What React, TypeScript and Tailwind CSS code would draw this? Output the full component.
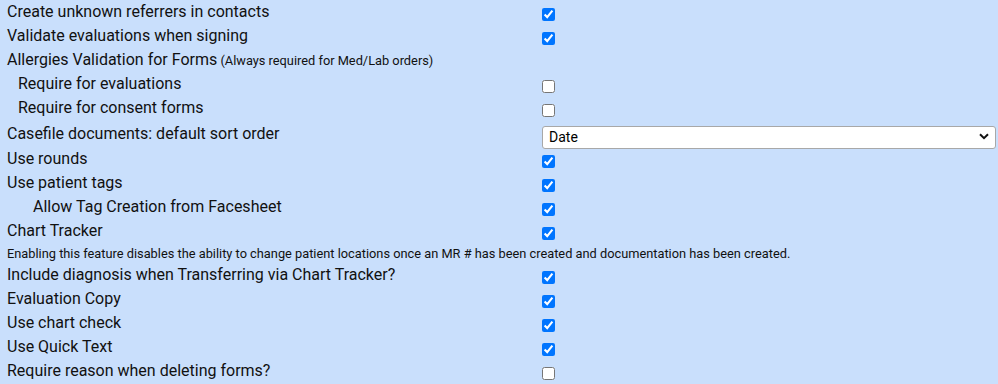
import React from "react";

type Row =
  | { kind: "check"; label: string; indent?: number; checked: boolean; small?: string }
  | { kind: "label"; label: string; small?: string }
  | { kind: "select"; label: string; value: string }
  | { kind: "note"; text: string };

const rows: Row[] = [
  { kind: "check", label: "Create unknown referrers in contacts", checked: true },
  { kind: "check", label: "Validate evaluations when signing", checked: true },
  { kind: "label", label: "Allergies Validation for Forms", small: "(Always required for Med/Lab orders)" },
  { kind: "check", label: "Require for evaluations", indent: 1, checked: false },
  { kind: "check", label: "Require for consent forms", indent: 1, checked: false },
  { kind: "select", label: "Casefile documents: default sort order", value: "Date" },
  { kind: "check", label: "Use rounds", checked: true },
  { kind: "check", label: "Use patient tags", checked: true },
  { kind: "check", label: "Allow Tag Creation from Facesheet", indent: 2, checked: true },
  { kind: "check", label: "Chart Tracker", checked: true },
  {
    kind: "note",
    text: "Enabling this feature disables the ability to change patient locations once an MR # has been created and documentation has been created.",
  },
  { kind: "check", label: "Include diagnosis when Transferring via Chart Tracker?", checked: true },
  { kind: "check", label: "Evaluation Copy", checked: true },
  { kind: "check", label: "Use chart check", checked: true },
  { kind: "check", label: "Use Quick Text", checked: true },
  { kind: "check", label: "Require reason when deleting forms?", checked: false },
];

function Label({ text, indent = 0, small }: { text: string; indent?: number; small?: string }) {
  const pad = indent === 2 ? "pl-[33px]" : indent === 1 ? "pl-[18px]" : "pl-[7px]";
  return (
    <div className={`w-[542px] shrink-0 whitespace-nowrap ${pad}`}>
      {text}
      {small && <span className="text-[12.8px]"> {small}</span>}
    </div>
  );
}

export default function App() {
  return (
    <div
      className="w-[998px] h-[384px] overflow-hidden bg-[#c9dffc] text-[16px] text-[#111]"
      style={{ fontFamily: "Roboto, 'Liberation Sans', sans-serif" }}
    >
      {rows.map((row, i) => {
        if (row.kind === "note") {
          return (
            <div key={i} className="h-[20px] flex items-center pt-[1px] pl-[7px] text-[12.8px] whitespace-nowrap">
              {row.text}
            </div>
          );
        }
        if (row.kind === "select") {
          return (
            <div key={i} className="h-[27px] flex items-center">
              <Label text={row.label} />
              <div className="relative self-start mt-[5px]">
                <select
                  defaultValue={row.value}
                  className="appearance-none w-[454px] h-[23px] bg-white border border-[#a8a8a8] rounded-[3px] pl-[6px] text-[14px] text-black outline-none"
                >
                  <option>Date</option>
                  <option>Name</option>
                </select>
                <svg
                  className="absolute right-[7px] top-[8px] pointer-events-none"
                  width="10"
                  height="7"
                  viewBox="0 0 10 7"
                >
                  <path d="M1 1.2 L5 5.2 L9 1.2" fill="none" stroke="#111" strokeWidth="2" />
                </svg>
              </div>
            </div>
          );
        }
        return (
          <div key={i} className="h-6 flex items-center">
            <Label text={row.label} indent={row.kind === "check" ? row.indent : 0} small={row.kind === "label" ? row.small : undefined} />
            {row.kind === "check" && (
              <input
                type="checkbox"
                defaultChecked={row.checked}
                className="m-0 w-[13px] h-[13px] self-start mt-[8px]"
              />
            )}
          </div>
        );
      })}
    </div>
  );
}
